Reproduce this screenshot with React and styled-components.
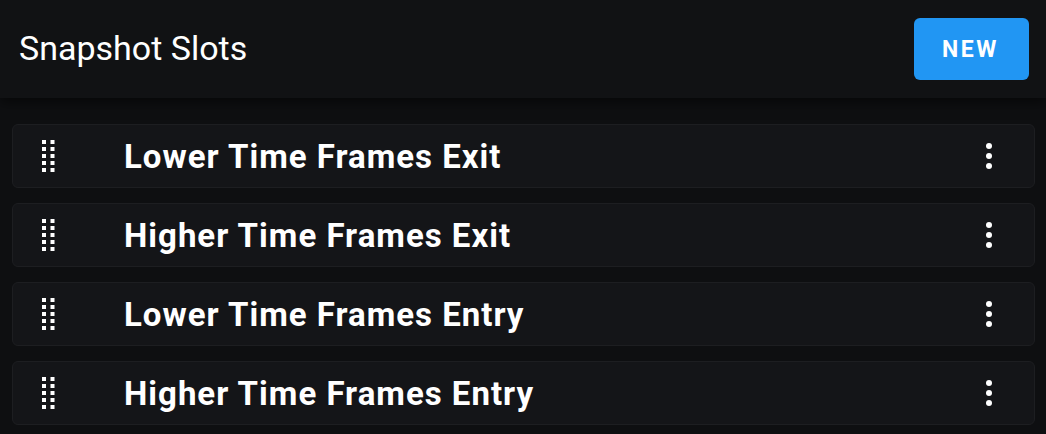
import React from 'react'
import styled, { createGlobalStyle } from 'styled-components'

const GlobalStyle = createGlobalStyle`
    html, body {
        margin: 0;
        padding: 0;
        background-color: #0e0f11;
        font-family: Roboto, "Noto Sans", sans-serif;
    }
`

const Page = styled.div`
    width: 1046px;
    height: 434px;
    overflow: hidden;
    background-color: #0e0f11;
    color: #ffffff;
`

const Header = styled.div`
    display: flex;
    align-items: center;
    justify-content: space-between;
    height: 98px;
    padding: 0 17px 0 19px;
    background-color: #111214;
    box-shadow: 0 4px 12px rgba(0, 0, 0, 0.55);
    position: relative;
`

const Title = styled.h1`
    margin: 0;
    margin-top: -2px;
    font-size: 34px;
    font-weight: 400;
    color: #ffffff;
`

const NewButton = styled.button`
    width: 115px;
    height: 62px;
    border: none;
    border-radius: 6px;
    background-color: #2196f3;
    color: #ffffff;
    font-family: Roboto, sans-serif;
    font-size: 23px;
    font-weight: 700;
    letter-spacing: 2.5px;
    padding-left: 4px;
    cursor: pointer;
`

const List = styled.div`
    display: flex;
    flex-direction: column;
    gap: 15px;
    padding: 26px 11px 0 12px;
`

const Slot = styled.div`
    display: flex;
    align-items: center;
    height: 62px;
    border: 1px solid #1d1e21;
    border-radius: 6px;
    background-color: #141518;
`

const Handle = styled.div`
    display: flex;
    width: 82px;
    padding-left: 29px;
    box-sizing: border-box;
    margin-top: 1px;
`

const SlotName = styled.div`
    flex: 1;
    font-size: 33px;
    font-weight: 700;
    letter-spacing: 1px;
    color: #ffffff;
    padding-left: 29px;
`

const Menu = styled.div`
    display: flex;
    width: 36px;
    justify-content: center;
    margin-right: 27px;
`

const slots = [
    'Lower Time Frames Exit',
    'Higher Time Frames Exit',
    'Lower Time Frames Entry',
    'Higher Time Frames Entry',
]

function DragDots() {
    const rows = [0, 1, 2, 3, 4]
    return (
        <svg width="13" height="33" viewBox="0 0 13 33">
            {rows.map(r => (
                <g key={r} fill="#ffffff">
                    <rect x="0" y={r * 7} width="4" height="4" />
                    <rect x="8.5" y={r * 7} width="4" height="4" />
                </g>
            ))}
        </svg>
    )
}

function Kebab() {
    return (
        <svg width="8" height="28" viewBox="0 0 8 28">
            <circle cx="4" cy="4" r="3" fill="#ffffff" />
            <circle cx="4" cy="14" r="3" fill="#ffffff" />
            <circle cx="4" cy="24" r="3" fill="#ffffff" />
        </svg>
    )
}

export default function App() {
    return (
        <Page>
            <GlobalStyle />
            <Header>
                <Title>Snapshot Slots</Title>
                <NewButton>NEW</NewButton>
            </Header>
            <List>
                {slots.map(name => (
                    <Slot key={name}>
                        <Handle><DragDots /></Handle>
                        <SlotName>{name}</SlotName>
                        <Menu><Kebab /></Menu>
                    </Slot>
                ))}
            </List>
        </Page>
    )
}
